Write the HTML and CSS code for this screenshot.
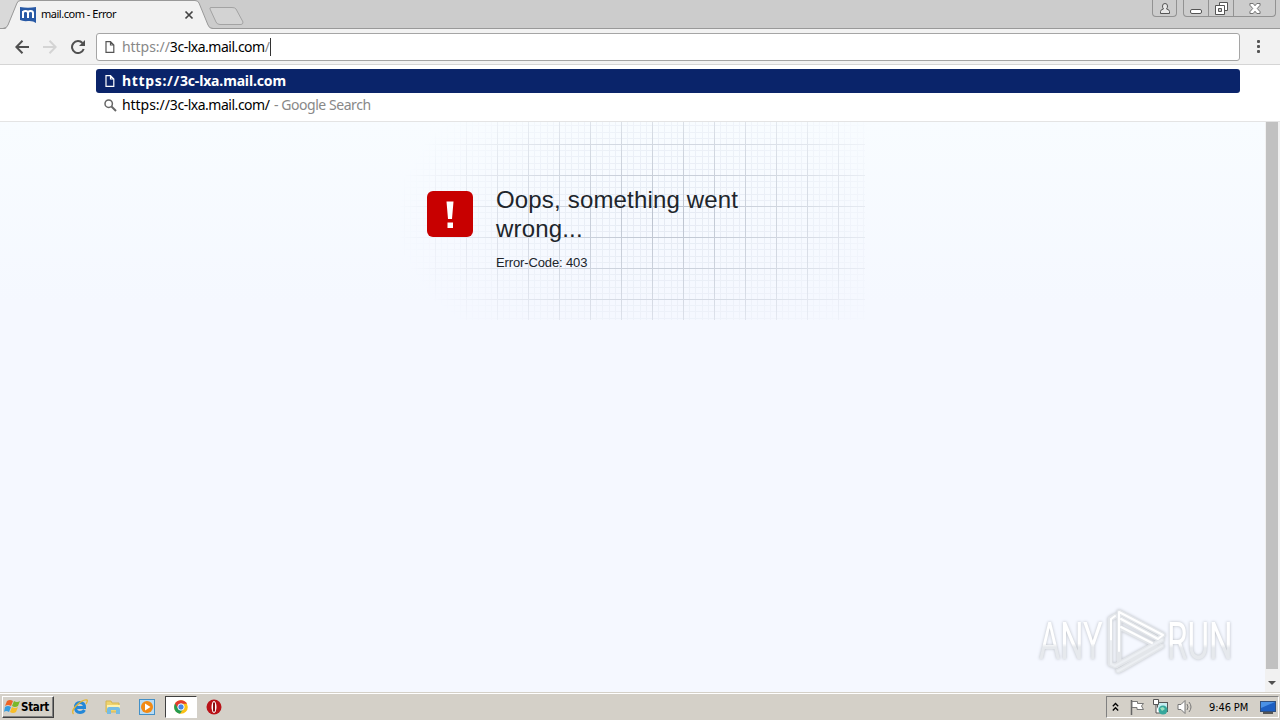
FILE: index.html
```html
<!DOCTYPE html>
<html lang="en">
<head>
    <meta charset="UTF-8">
    <title>mail.com - Error</title>
    <link rel="stylesheet" href="styles.css">
</head>
<body>
<div class="screen">
    <!-- tab strip -->
    <header class="tabstrip">
        <svg class="tab-shape" width="260" height="29" viewBox="0 0 260 29">
            <path d="M0 0H18L7 26Q6 28 3 28H0Z" fill="#d9d9d9"/>
            <path d="M5 29Q7 28 8 25L17 3Q18 0.500 21 .5H195Q198 .5 199 3L208 25Q209 28.500 213 29Z" fill="#f2f2f2"/>
            <path d="M0 28.500H3Q7 28 8 25L17 3Q18 .5 21 .5H195Q198 .5 199 3L208 25Q209 28.500 213 28.500H260" fill="none" stroke="#999"/>
            <path d="M211 7.500H232Q235 7.500 236 9L243 22Q243 24.500 241 24.500H220Q217 24.500 216 22L210 9Q209.500 7.500 211 7.500Z" fill="#d3d3d3" stroke="#a3a3a3"/>
        </svg>
        <div class="tab">
            <svg width="16" height="16" viewBox="0 0 16 16">
                <path d="M0 0Q8 1.500 16 0V16Q13 13.500 8 14Q3 14.500 0 13Z" fill="#2859a5"/>
                <path d="M3 11V4M3 6Q3 4 5.500 4Q8 4 8 6V11M8 6Q8 4 10.500 4Q13 4 13 6V11" fill="none" stroke="#fff" stroke-width="2"/>
            </svg>
            <span class="tab-title">mail.com - Error</span>
            <svg class="tab-close" width="10" height="10" viewBox="0 0 10 10"><path d="M1.500 1.500L8.500 8.500M8.500 1.500L1.500 8.500" stroke="#444" stroke-width="1.700"/></svg>
        </div>
        <div class="win-btn user">
            <svg width="12" height="13" viewBox="0 0 12 13"><path d="M1.500 11.500V9.500Q1.500 7.500 4.500 7Q3.500 6 3.500 4Q3.500 1.500 6 1.500T8.500 4Q8.500 6 7.500 7Q10.500 7.500 10.500 9.500V11.500Z" fill="#e8e8e8" stroke="#555"/></svg>
        </div>
        <div class="win-group">
            <div class="win-btn min"><svg width="13" height="13" viewBox="0 0 13 13"><rect x=".5" y="7.500" width="11" height="4" rx="1.500" fill="#fff" stroke="#555"/></svg></div>
            <div class="win-btn max"><svg width="13" height="13" viewBox="0 0 13 13"><path d="M4.500 .5H12.500V8.500H4.500Z" fill="#fff" stroke="#555"/><path d="M.5 3.500H9.500V12.500H.5Z" fill="#fff" stroke="#555"/><path d="M3.500 6.500H6.500V9.500H3.500Z" fill="#ccc" stroke="#555"/></svg></div>
            <div class="win-btn close"><svg width="12" height="11" viewBox="0 0 12 12"><path d="M.5 .5H4L6 3L8 .5H11.500V2.500L8.500 6L11.500 9.500V11.500H8L6 9L4 11.500H.5V9.500L3.500 6L.5 2.500Z" fill="#fff" stroke="#666"/></svg></div>
        </div>
    </header>

    <!-- toolbar -->
    <div class="toolbar">
        <svg width="14" height="14" viewBox="0 0 14 14"><path d="M7.500 .8L1.300 7L7.500 13.200M1.500 7H14" fill="none" stroke="#505050" stroke-width="2"/></svg>
        <svg width="14" height="14" viewBox="0 0 14 14"><path d="M6.500 .8L12.700 7L6.500 13.200M12.500 7H0" fill="none" stroke="#d4d4d4" stroke-width="2"/></svg>
        <svg width="14" height="14" viewBox="0 0 14 14"><path d="M11.500 3A6 6 0 1 0 12.700 9" fill="none" stroke="#505050" stroke-width="2"/><path d="M14 0V6H8Z" fill="#505050"/></svg>
        <div class="omnibox">
            <svg width="10" height="12" viewBox="0 0 10 12"><path d="M1 .7H5.500L8.800 4V11.300H1ZM5.500 .7V4H8.800" fill="none" stroke="#555" stroke-width="1.200"/></svg>
            <span class="url"><span class="dim scheme">https://</span>3c-lxa.mail.com<span class="dim">/</span></span><i class="caret"></i>
        </div>
        <div class="menu-dots"><i></i><i></i><i></i></div>
    </div>

    <!-- suggestions -->
    <div class="suggest">
        <div class="row active">
            <svg width="10" height="12" viewBox="0 0 10 12"><path d="M1 .7H5.500L8.800 4V11.300H1ZM5.500 .7V4H8.800" fill="none" stroke="#fff" stroke-width="1.200"/></svg>
            <span class="match"><span class="scheme">https://</span>3c-lxa.mail.com</span>
        </div>
        <div class="row">
            <svg class="lens" width="13" height="13" viewBox="0 0 13 13"><circle cx="4.700" cy="4.700" r="3.700" fill="none" stroke="#666" stroke-width="1.500"/><path d="M7.500 7.500L12 12" stroke="#666" stroke-width="2"/></svg>
            <span class="url"><span class="scheme">https://</span>3c-lxa.mail.com/</span><span class="google">- Google Search</span>
        </div>
    </div>

    <main class="page">
        <div class="content">
            <section class="error">
                <div class="grid-bg"></div>
                <svg class="alert" width="46" height="46" viewBox="0 0 46 46"><rect width="46" height="46" rx="6" fill="#c80000"/><path d="M19.500 10.500H26.500L25 28H21ZM20.500 31.500H26V37H20.500Z" fill="#fff"/></svg>
                <div class="message">
                    <h1>Oops, something went<br>wrong...</h1>
                    <p>Error-Code: 403</p>
                </div>
            </section>
        </div>
        <div class="scrollbar">
            <div class="thumb"></div>
            <svg width="15" height="24" viewBox="0 0 15 24"><path d="M3 12H11L7 16Z" fill="#505050"/></svg>
        </div>
        <!-- watermark -->
        <svg class="watermark" width="216" height="76" viewBox="0 0 216 76">
            <defs>
                <linearGradient id="wm" x1="0" y1="0" x2="0" y2="1"><stop offset=".54" stop-color="#fff"/><stop offset=".6" stop-color="#e6e9ed"/></linearGradient>
            </defs>
            <text transform="translate(5 50) scale(.64 1)" fill="url(#wm)">ANY</text>
            <text transform="translate(133 50) scale(.65 1)" fill="url(#wm)">RUN</text>
            <g fill="none" stroke-linejoin="round" stroke-linecap="round">
                <path d="M81 7L76 10V55L81 57L128 31M85 51V3L129 26L124 30L87 10M88 60L128 37M85 18L121 36L82 57M88 60L84 62" stroke="#e3e6ea" stroke-width="5"/>
                <path d="M77 32V10L81 7M85 42V3L129 26L124 30L87 10M87 18L118 34" stroke="#fff" stroke-width="2"/>
                <path d="M77 32V55L81 57L128 31M88 60L128 37M84 62L88 60" stroke="#eceff3" stroke-width="2"/>
            </g>
        </svg>
    </main>

    <footer class="taskbar">
        <div class="start">
            <svg width="17" height="16" viewBox="0 0 17 16"><path d="M3 2Q6 0 9 2L7 7Q4 5 1 7Z" fill="#ed6425"/><path d="M10 2Q13 4 16 2L14 7Q11 9 8 7Z" fill="#7ab829"/><path d="M1 8Q4 6 7 8L5 13Q2 11 0 13Z" fill="#369de0"/><path d="M8 8Q11 10 14 8L12 13Q9 15 6 13Z" fill="#f8bd28"/></svg>
            <b>Start</b>
        </div>
        <div class="task ie">
            <svg width="16" height="16" viewBox="0 0 16 16"><path d="M12.500 11Q11 13.500 8 13.500Q3.500 13.500 3.500 8.500T8 3.500Q12.500 3.500 12.500 8.500H4" fill="none" stroke="#2488d8" stroke-width="3"/><path d="M1.500 15Q-1 12 4 7Q11 0 15 1Q16 2 14 5" fill="none" stroke="#e5b632" stroke-width="1.300"/></svg>
        </div>
        <div class="task">
            <svg width="16" height="16" viewBox="0 0 16 16"><path d="M1 2H6L7 4H14V13H1Z" fill="#eed36e" stroke="#d4b552"/><path d="M2 6H15V11H2Z" fill="#fff2ad"/><path d="M2 15V10Q2 8 4 8H13Q15 8 15 10V15H11V11H6V15Z" fill="#75bce4"/></svg>
        </div>
        <div class="task">
            <svg width="16" height="16" viewBox="0 0 16 16"><rect x=".5" y=".5" width="15" height="15" fill="#b8dcf5" stroke="#4390c7"/><circle cx="8" cy="8" r="6" fill="#f28a14"/><path d="M6 4.500L11.500 8L6 11.500Z" fill="#fff"/></svg>
        </div>
        <div class="task selected">
            <svg width="14" height="14" viewBox="0 0 14 14"><circle cx="7" cy="7" r="6.800" fill="#fbc116"/><path d="M7 7L1 3.500A7 7 0 0 0 6 13.800L9.500 8.500Z" fill="#249b50"/><path d="M1 3.500A7 7 0 0 1 13 3.800H7L4 8.500Z" fill="#e23b2e"/><circle cx="7" cy="7" r="3.200" fill="#4486e8" stroke="#fff"/></svg>
        </div>
        <div class="task">
            <svg width="16" height="16" viewBox="0 0 16 16"><circle cx="8" cy="8" r="7.500" fill="#b91218"/><ellipse cx="8" cy="8" rx="2.500" ry="6" fill="#fff"/><path d="M8 3.500V12.500" stroke="#8a1014" stroke-width="2"/></svg>
        </div>
        <div class="tray">
            <svg width="7" height="10" viewBox="0 0 7 10"><path d="M.8 4.300L3.500 1.500L6.200 4.300M.8 8.500L3.500 5.700L6.200 8.500" fill="none" stroke="#000" stroke-width="1.300"/></svg>
            <svg class="flag" width="16" height="16" viewBox="0 0 16 16"><path d="M2.500 1V16" stroke="#666" stroke-width="1.500"/><path d="M3 2.500H8.500V4.500H14.500L12.500 7L14.500 10.500H8V8.500H3Z" fill="#fff" stroke="#777"/></svg>
            <svg class="net" width="16" height="16" viewBox="0 0 16 16"><rect x="4.500" y="3.500" width="10" height="9" fill="#c5edf0" stroke="#555"/><path d="M.5 .5H5.500V5.500H.5ZM3 5.500V14H7" fill="#fff" stroke="#555"/><circle cx="10" cy="11" r="4.500" fill="#36a79c"/><path d="M7 9L10 8L12 10L9 12Z" fill="#9adfbd"/></svg>
            <svg class="sound" width="16" height="16" viewBox="0 0 16 16"><path d="M1 5.500H4L8 1.500V14.500L4 10.500H1Z" fill="#fff" stroke="#777"/><path d="M10 5Q12 8 10 11M12 3Q16 8 12 13" fill="none" stroke="#777"/></svg>
            <span class="clock">9:46 PM</span>
            <svg class="desktop" width="16" height="15" viewBox="0 0 16 15"><rect x=".5" y="1.500" width="15" height="10" fill="#1d5fc2" stroke="#32507c"/><path d="M1 2H15L1 8Z" fill="#4a91e5"/><path d="M3 13H13" stroke="#555" stroke-width="2"/></svg>
        </div>
    </footer>
</div>
</body>
</html>
```
FILE: styles.css
```css
* {
    box-sizing: border-box;
}
body {
    margin: 0;
    overflow: hidden;
    font-family: "DejaVu Sans Condensed", "DejaVu Sans", sans-serif;
}
svg {
    display: block;
    flex: none;
}
.screen {
    width: 1280px;
    height: 720px;
    display: flex;
    flex-direction: column;
}
.tabstrip {
    height: 29px;
    position: relative;
    display: flex;
    align-items: flex-start;
    background: #ccc;
    border-bottom: 1px solid #999;
}
.tab-shape {
    position: absolute;
    left: 0;
    top: 0;
}
.tab {
    position: relative;
    display: flex;
    align-items: center;
    width: 194px;
    height: 28px;
    margin-left: 20px;
    margin-right: auto;
    padding-top: 1px;
}
.tab-title {
    margin-left: 5px;
    margin-top: -2px;
    font-family: "Noto Sans", sans-serif;
    font-size: 11px;
    letter-spacing: -0.48px;
    white-space: nowrap;
}
.tab-close {
    margin-left: auto;
    margin-right: 20px;
}
.win-btn {
    height: 17px;
    display: flex;
    align-items: center;
    justify-content: center;
}
.user {
    width: 25px;
    margin-right: 6px;
    border: 1px solid #929292;
    border-top: 0;
    border-radius: 0 0 4px 4px;
}
.win-group {
    display: flex;
    width: 93px;
    margin-right: 4px;
    border: 1px solid #929292;
    border-top: 0;
    border-radius: 0 0 4px 4px;
}
.win-group .win-btn {
    height: 16px;
}
.min, .max {
    width: 25px;
    border-right: 1px solid #929292;
}
.close {
    flex: 1;
}
.toolbar {
    height: 36px;
    display: flex;
    align-items: center;
    gap: 14px;
    padding: 0 18px 0 15px;
    background: #f2f2f2;
    border-bottom: 1px solid #d5d5d5;
}
.omnibox {
    width: 1144px;
    height: 28px;
    margin-left: -3px;
    display: flex;
    align-items: center;
    padding-left: 8px;
    background: #fff;
    border: 1px solid #a5a5a5;
    border-radius: 3px;
}
.url {
    width: 149px;
    margin-left: 7px;
    font-family: "Noto Sans", sans-serif;
    font-size: 14px;
    letter-spacing: -0.48px;
    white-space: nowrap;
}
.scheme {
    letter-spacing: -0.05px;
}
.dim {
    color: #888;
}
.caret {
    width: 1px;
    height: 18px;
    margin-left: -1px;
    background: #333;
}
.menu-dots {
    display: flex;
    flex-direction: column;
    gap: 2px;
    margin-left: 3px;
}
.menu-dots i {
    width: 3px;
    height: 3px;
    background: #555;
    border-radius: 1px;
}
.suggest {
    height: 57px;
    padding: 4px 40px 0 96px;
    background: #fff;
    border-bottom: 1px solid #e4e4e4;
}
.row {
    height: 24px;
    display: flex;
    align-items: center;
    padding-left: 9px;
}
.row > span {
    margin-top: -1px;
}
.active {
    color: #fff;
    background: #0a246a;
    border-radius: 3px;
}
.match {
    margin-left: 7px;
    font-family: "Noto Sans", sans-serif;
    font-size: 14px;
    font-weight: bold;
    letter-spacing: -0.15px;
}
.match .scheme {
    letter-spacing: 0.65px;
}
.lens {
    margin-left: -1px;
    margin-right: -2px;
}
.google {
    margin-left: 3px;
    font-family: "Noto Sans", sans-serif;
    font-size: 14px;
    letter-spacing: -0.45px;
    color: #888;
}
.page {
    height: 570px;
    position: relative;
    display: flex;
    background: linear-gradient(#f8fcff, #f5f8ff 180px);
}
.content {
    flex: 1;
}
.error {
    position: relative;
    width: 465px;
    height: 198px;
    margin-left: 400px;
    display: flex;
    padding: 69px 0 0 27px;
}
.grid-bg {
    position: absolute;
    inset: 0;
    background-image:
        linear-gradient(90deg, #bdc4d0 1px, transparent 1px),
        linear-gradient(#bdc4d0 1px, transparent 1px),
        repeating-linear-gradient(90deg, #e5eaf3 0 1px, transparent 1px 6.2px),
        repeating-linear-gradient(#e5eaf3 0 1px, transparent 1px 6.2px);
    background-size: 31px 31px;
    background-position: 4px 22px;
    -webkit-mask-image: radial-gradient(ellipse 270px 165px at 265px 95px, #000 5%, rgba(0, 0, 0, .6) 50%, rgba(0, 0, 0, .25) 78%, transparent);
    mask-image: radial-gradient(ellipse 270px 165px at 265px 95px, #000 5%, rgba(0, 0, 0, .6) 50%, rgba(0, 0, 0, .25) 78%, transparent);
}
.alert {
    position: relative;
}
.message {
    position: relative;
    margin-left: 23px;
    margin-top: -6px;
    color: #20252b;
    font-family: "Liberation Sans", Arial, sans-serif;
}
.message h1 {
    margin: 0;
    font-size: 24px;
    line-height: 29px;
    font-weight: normal;
    letter-spacing: 0.17px;
    white-space: nowrap;
}
.message p {
    margin: 12px 0 0;
    font-size: 13px;
    line-height: 15px;
    letter-spacing: -0.13px;
}
.scrollbar {
    width: 15px;
    background: #f1f1f1;
}
.thumb {
    width: 12px;
    height: 547px;
    margin-left: 1px;
    background: #c1c1c1;
}
.watermark {
    position: absolute;
    left: 1034px;
    top: 487px;
    filter: drop-shadow(0 0 1.5px #b9bdc4);
}
.watermark text {
    font-family: Roboto, sans-serif;
    font-size: 51px;
}
.taskbar {
    height: 28px;
    display: flex;
    align-items: center;
    padding: 3px 0 1px 2px;
    background: #d4d0c8;
    box-shadow: inset 0 1px #d4d0c8, inset 0 2px #fff;
}
.start {
    width: 52px;
    height: 22px;
    margin-right: 9px;
    display: flex;
    align-items: center;
    padding-left: 1px;
    border: 1px solid;
    border-color: #fff #404040 #404040 #fff;
    box-shadow: inset -1px -1px #808080;
    font-size: 11.5px;
}
.start b {
    letter-spacing: -0.3px;
}
.task {
    width: 32px;
    height: 22px;
    margin-right: 2px;
    display: flex;
    align-items: center;
    justify-content: center;
}
.ie {
    padding-left: 1px;
}
.selected {
    margin-right: 1px;
    background: #fff;
    border: 1px solid;
    border-color: #404040 #fff #fff #404040;
}
.tray {
    width: 173px;
    height: 22px;
    margin-left: auto;
    margin-right: 1px;
    display: flex;
    align-items: center;
    padding-left: 5px;
    border: 1px solid;
    border-color: #808080 #fff #fff #808080;
    font-size: 11px;
}
.flag {
    margin-left: 10px;
}
.net, .sound {
    margin-left: 8px;
}
.clock {
    margin-left: 16px;
    letter-spacing: -0.1px;
    white-space: nowrap;
}
.desktop {
    margin-left: auto;
    margin-right: 2px;
}
```
